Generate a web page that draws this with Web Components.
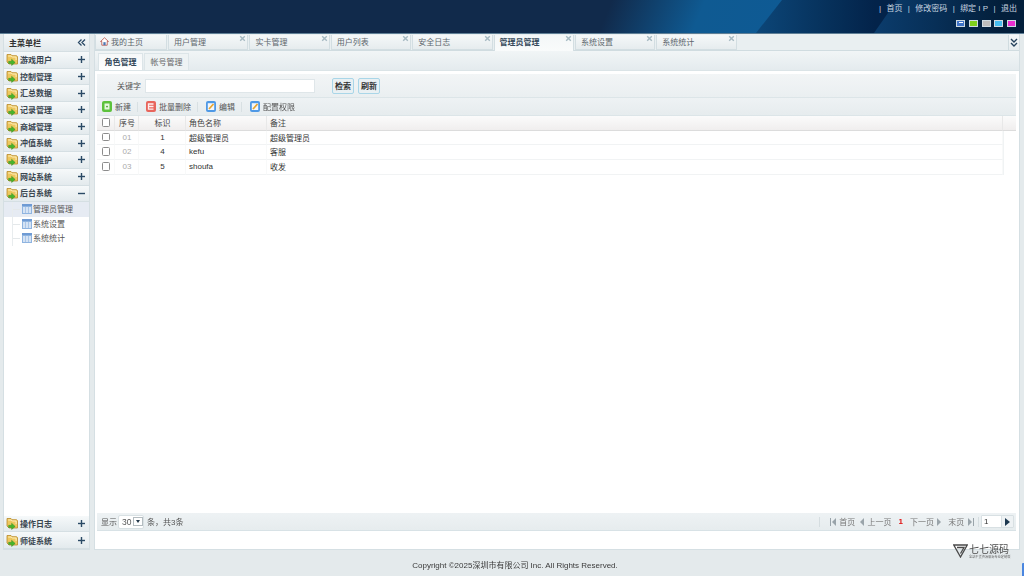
<!DOCTYPE html>
<html>
<head>
<meta charset="utf-8">
<title>后台</title>
<style>
    html, body { margin: 0; height: 100%; overflow: hidden; }
    body {
        width: 1024px; height: 576px;
        display: flex; flex-direction: column;
        background: #e4eaec;
        font-family: "Liberation Sans", "Noto Sans CJK SC", sans-serif;
        font-size: 8px; color: #333;
        filter: blur(.3px);
    }
</style>
</head>
<body>
<app-header></app-header>
<app-body>
    <side-menu slot="side">
        <menu-group label="游戏用户"></menu-group>
        <menu-group label="控制管理"></menu-group>
        <menu-group label="汇总数据"></menu-group>
        <menu-group label="记录管理"></menu-group>
        <menu-group label="商城管理"></menu-group>
        <menu-group label="冲值系统"></menu-group>
        <menu-group label="系统维护"></menu-group>
        <menu-group label="网站系统"></menu-group>
        <menu-group label="后台系统" open>
            <menu-leaf label="管理员管理" active></menu-leaf>
            <menu-leaf label="系统设置"></menu-leaf>
            <menu-leaf label="系统统计"></menu-leaf>
        </menu-group>
        <menu-group slot="bottom" label="操作日志"></menu-group>
        <menu-group slot="bottom" label="师徒系统"></menu-group>
    </side-menu>
    <main-panel slot="main"></main-panel>
</app-body>
<app-footer></app-footer>

<script>
const folderIcon = `<svg width="13" height="13" viewBox="0 0 13 13"><path d="M1 1.5h4l1 1.2h4.6l.9 1V11H3L1 9z" fill="#eec75e" stroke="#b8892a" stroke-width=".8"/><path d="M2.2 3h3l1 1h3.9v3" fill="none" stroke="#fff3c4" stroke-width=".9"/><path d="M2.6 8.3h3V6.2l3.6 3.2-3.6 3.2v-2.1h-3z" fill="#45b52c" stroke="#2f8a1c" stroke-width=".4"/></svg>`;
const tableIcon = `<svg width="10" height="10" viewBox="0 0 10 10"><rect width="10" height="10" fill="#8fb4e0"/><rect width="10" height="2" fill="#6f9bd4"/><path d="M1 3h2.3v6H1zM3.9 3h2.3v6H3.9zM6.8 3h2.2v6H6.8z" fill="#d5e3f4"/></svg>`;
const greenIcon = `<svg width="10" height="11" viewBox="0 0 10 11"><rect width="10" height="11" rx="2" fill="#5cc23c"/><path d="M2.5 2.5h5v6h-5z" fill="#e6f6df"/><path d="M4.2 5.6h1.6M5 4.8v1.6" stroke="#3e9e22" stroke-width=".9"/></svg>`;
const redIcon = `<svg width="10" height="11" viewBox="0 0 10 11"><rect width="10" height="11" rx="2" fill="#e8655c"/><path d="M7.5 3H2.5v5.2h5M2.5 5.5h5" fill="none" stroke="#fdeeee" stroke-width="1.3"/></svg>`;
const editIcon = `<svg width="10" height="11" viewBox="0 0 10 11"><rect width="10" height="11" rx="2" fill="#4f99e6"/><rect x="1.8" y="2.2" width="6.4" height="6.8" fill="#f3f6fa"/><path d="M3 8 7.5 3" stroke="#e9a52c" stroke-width="1.7"/></svg>`;

class AppHeader extends HTMLElement {
    constructor() {
        super()
        this.attachShadow({ mode: 'open' })
        this.shadowRoot.innerHTML = `
        <style>
            :host{
                display:flex;
                flex-direction:column;
                align-items:flex-end;
                position:relative;
                box-sizing:border-box;
                height:34px;
                flex:none;
                padding:3px 7px 0 0;
                border-bottom:1px solid #5f7f96;
                background:linear-gradient(112deg, #112a4b 0, #112a4b 59%, #0f5a92 68%, #0e5a94 76%);
                color:#c8d6e0;
            }
            :host::before{
                content:'';
                position:absolute;
                inset:0;
                clip-path:polygon(782px 0, 1024px 0, 1024px 33px, 756px 33px);
                background:linear-gradient(90deg,#0c4678 756px,#06305a 830px,#03234a 875px);
            }
            :host::after{
                content:'';
                position:absolute;
                inset:0;
                clip-path:polygon(897px 0, 1024px 0, 1024px 33px, 874px 33px);
                background:linear-gradient(90deg,#0b3c6c 875px,#072f57 935px,#031f3b 1000px);
            }
            .links,.sw{ position:relative; z-index:1; }
            .links{ display:flex; gap:5.4px; font-size:8px; line-height:11px; }
            .links span{ white-space:nowrap; }
            .sw{ display:flex; gap:3.75px; margin-top:6px; margin-right:1px; }
            .sw i{ display:block; width:7px; height:5px; border:1px solid #cfdbe2; }
        </style>
        <div class="links">
            <span>|</span><span>首页</span><span>|</span><span>修改密码</span><span>|</span><span>绑定 I P</span><span>|</span><span>退出</span>
        </div>
        <div class="sw">
            <i style="background:linear-gradient(#fff,#fff) 2px 1px/4px 1px no-repeat,#3f74c8"></i><i style="background:#7fd01c"></i><i style="background:#bdbdbd"></i><i style="background:#45bdf0"></i><i style="background:#ea2fd0"></i>
        </div>`
    }
}

class AppBody extends HTMLElement {
    constructor() {
        super()
        this.attachShadow({ mode: 'open' })
        this.shadowRoot.innerHTML = `
        <style>
            :host{
                display:flex;
                flex:none;
                height:516px;
                padding:0 4px 0 3px;
                gap:4px;
                box-sizing:border-box;
            }
        </style>
        <slot name="side"></slot><slot name="main"></slot>`
    }
}

class SideMenu extends HTMLElement {
    constructor() {
        super()
        this.attachShadow({ mode: 'open' })
        this.shadowRoot.innerHTML = `
        <style>
            :host{
                display:flex;
                flex-direction:column;
                width:87px;
                flex:none;
                background:#fff;
                border:solid #d5dfe3;
                border-width:0 1px 1px 1px;
                box-sizing:border-box;
            }
            .title{
                display:flex;
                align-items:center;
                justify-content:space-between;
                height:17px;
                padding:0 3px 0 5px;
                font-weight:bold;
                color:#333;
                background:linear-gradient(#f5f8f9,#e2e9ec);
                border-bottom:1px solid #d5dfe3;
                flex:none;
            }
            .list{ flex:1; }
            svg{ display:block; }
        </style>
        <div class="title">主菜单栏
            <svg width="9" height="9" viewBox="0 0 9 9" fill="none" stroke="#2b4a66" stroke-width="1.3"><path d="M4.5 1.5 1.5 4.5 4.5 7.5M8 1.5 5 4.5 8 7.5"/></svg>
        </div>
        <div class="list"><slot></slot></div>
        <div><slot name="bottom"></slot></div>`
    }
}

class MenuGroup extends HTMLElement {
    constructor() {
        super()
        this.attachShadow({ mode: 'open' })
        const open = this.hasAttribute('open')
        this.shadowRoot.innerHTML = `
        <style>
            :host{ display:block; }
            .row{
                display:flex;
                align-items:center;
                box-sizing:border-box;
                height:16.7px;
                padding:0 3px 0 2px;
                background:linear-gradient(#f6f9fa,#e3eaed);
                border-bottom:1px solid #d5dfe3;
                font-weight:bold;
                color:#3a4650;
            }
            .label{ flex:1; margin:0 0 1px 1px; }
            :host([slot=bottom]) .label{ margin-bottom:0; }
            svg{ display:block; flex:none; }
        </style>
        <div class="row">
            ${folderIcon}
            <span class="label">${this.getAttribute('label')}</span>
            <svg width="9" height="9" viewBox="0 0 9 9" fill="#2b4a66">
                <rect x="1" y="3.8" width="7" height="1.4"/>
                ${open ? '' : '<rect x="3.8" y="1" width="1.4" height="7"/>'}
            </svg>
        </div>
        ${open ? '<div><slot></slot></div>' : ''}`
    }
}

class MenuLeaf extends HTMLElement {
    constructor() {
        super()
        this.attachShadow({ mode: 'open' })
        this.shadowRoot.innerHTML = `
        <style>
            :host{
                display:flex;
                align-items:center;
                height:14.5px;
                padding-left:8px;
                color:#555;
            }
            :host([active]){ background:#e6ebf3; }
            .tree{ width:10px; height:100%; border-left:1px solid #e8ecee; position:relative; box-sizing:border-box; flex:none; }
            .tree::after{ content:''; position:absolute; left:0; right:2px; top:50%; border-top:1px solid #e4e8ea; }
            svg{ display:block; flex:none; margin-right:1px; }
            span.t{ margin-bottom:1px; }
        </style>
        <span class="tree"></span>${tableIcon}<span class="t">${this.getAttribute('label')}</span>`
    }
}

class TabStrip extends HTMLElement {
    constructor() {
        super()
        this.attachShadow({ mode: 'open' })
        this.shadowRoot.innerHTML = `
        <style>
            :host{
                display:flex;
                align-items:flex-end;
                box-sizing:border-box;
                height:17px;
                flex:none;
                padding:1px 0 0 0;
                gap:1px;
                background:#e9eff1;
                border-bottom:1px solid #d0dce0;
            }
            .more{
                margin-left:auto;
                width:11px;
                height:15px;
                box-sizing:border-box;
                align-self:flex-start;
                display:flex;
                align-items:center;
                justify-content:center;
                background:linear-gradient(#f5f8f9,#e6ecee);
                border:solid #d0dce0;
                border-width:0 0 0 1px;
            }
        </style>
        <slot></slot>
        <div class="more">
            <svg width="8" height="9" viewBox="0 0 8 9" fill="none" stroke="#26425c" stroke-width="1.4"><path d="M1 1l3 3 3-3M1 5l3 3 3-3"/></svg>
        </div>`
    }
}

class TabItem extends HTMLElement {
    constructor() {
        super()
        this.attachShadow({ mode: 'open' })
        const close = !this.hasAttribute('home')
        this.shadowRoot.innerHTML = `
        <style>
            :host{
                display:flex;
                align-items:center;
                position:relative;
                box-sizing:border-box;
                width:80.4px;
                height:15px;
                padding:0 0 2px 5px;
                color:#5d666d;
                background:linear-gradient(#f5f8f9,#e6ecee);
                border:solid #d3dee2;
                border-width:0 1px 1px 1px;
            }
            :host([home]){ width:72px; padding-left:4px; gap:2px; }
            :host([active]){
                height:16px;
                margin-bottom:-1px;
                background:linear-gradient(#f4f7f8,#f9fbfb);
                border-bottom:0;
                padding-bottom:3px;
                font-weight:bold;
                color:#34485a;
            }
            .x{ position:absolute; right:1px; top:0; }
            svg{ display:block; }
        </style>
        ${close ? '' : `<svg width="9" height="9" viewBox="0 0 8 8"><path d="M4 .7.5 4H1.6v3.3h4.8V4h1.1z" fill="#fff" stroke="#b5493f" stroke-width=".7"/><rect x="3" y="4.6" width="2" height="2.7" fill="#4b78b5"/></svg>`}
        <span>${this.getAttribute('label')}</span>
        ${close ? `<svg class="x" width="7" height="7" viewBox="0 0 7 7" stroke="#a5b9c2" stroke-width="1.4"><path d="M1.2 1.2l4.6 4.6M5.8 1.2 1.2 5.8"/></svg>` : ''}`
    }
}

class SubTabs extends HTMLElement {
    constructor() {
        super()
        this.attachShadow({ mode: 'open' })
        this.shadowRoot.innerHTML = `
        <style>
            :host{
                display:flex;
                align-items:flex-end;
                gap:1px;
                box-sizing:border-box;
                height:20px;
                flex:none;
                padding:2px 0 0 3px;
                background:linear-gradient(#f1f5f6,#e4ebee);
                border-bottom:1px solid #dbe4e7;
            }
            span{
                display:flex;
                align-items:center;
                justify-content:center;
                box-sizing:border-box;
                width:45px;
                height:17px;
                padding-bottom:2px;
                background:#eef3f4;
                border:solid #dce5e8;
                border-width:1px 1px 0 1px;
                color:#666;
            }
            span.on{ background:linear-gradient(#f6f8f9,#fff); color:#34485a; font-weight:bold; }
        </style>
        <span class="on">角色管理</span><span>帐号管理</span>`
    }
}

class SearchBar extends HTMLElement {
    constructor() {
        super()
        this.attachShadow({ mode: 'open' })
        this.shadowRoot.innerHTML = `
        <style>
            :host{
                display:flex;
                align-items:center;
                box-sizing:border-box;
                height:24px;
                flex:none;
                padding-left:20px;
                background:linear-gradient(#f2f5f6,#eaeff1);
                border-bottom:1px solid #dce5e8;
            }
            label{ color:#555; width:28px; }
            .input{
                box-sizing:border-box;
                width:170px;
                height:14px;
                background:#fff;
                border:1px solid #dfe6e9;
                margin-right:17px;
            }
            button{
                box-sizing:border-box;
                width:22px;
                height:16px;
                margin-right:4px;
                padding:0 0 1px;
                font:bold 8px "Liberation Sans","Noto Sans CJK SC",sans-serif;
                color:#333;
                background:#e9f0f3;
                border:1.5px solid #a9d6e8;
                border-radius:2px;
            }
        </style>
        <label>关键字</label><div class="input"></div><button>检索</button><button>刷新</button>`
    }
}

class ToolBar extends HTMLElement {
    constructor() {
        super()
        this.attachShadow({ mode: 'open' })
        this.shadowRoot.innerHTML = `
        <style>
            :host{
                display:flex;
                align-items:center;
                box-sizing:border-box;
                height:18px;
                flex:none;
                padding-left:5px;
                background:linear-gradient(#eef2f4,#e6ecee);
                border-bottom:1px solid #dce5e8;
            }
            .sep{ width:1px; height:10px; background:#d8e0e3; margin:0 8px 0 6px; }
            .b{ display:flex; align-items:center; gap:3px; color:#555; }
            svg{ display:block; }
            .b span{ margin-bottom:1px; }
        </style>
        <div class="b">${greenIcon}<span>新建</span></div><div class="sep"></div>
        <div class="b">${redIcon}<span>批量删除</span></div><div class="sep"></div>
        <div class="b">${editIcon}<span>编辑</span></div><div class="sep"></div>
        <div class="b">${editIcon}<span>配置权限</span></div>`
    }
}

class RoleTable extends HTMLElement {
    constructor() {
        super()
        this.attachShadow({ mode: 'open' })
        const rows = [['01', '1', '超级管理员', '超级管理员'], ['02', '4', 'kefu', '客服'], ['03', '5', 'shoufa', '收发']]
        const box = '<span class="box"></span>'
        this.shadowRoot.innerHTML = `
        <style>
            :host{ display:block; flex:1; background:#fff; position:relative; }
            .grid{
                display:grid;
                grid-template-columns:18px 24px 47px 81px 1fr;
                grid-template-rows:15px 14px 15px 15px;
                width:906px;
                border-right:1px solid #f0f3f4;
            }
            .grid > div{ display:flex; align-items:center; padding-left:3px; box-sizing:border-box; }
            .h{ padding-bottom:1px; background:linear-gradient(#fbfbfb,#f0eeee); border-bottom:1px solid #dcdcdc; border-right:1px solid #e8e8e8; color:#444; }
            .c{ padding-bottom:1px; border-bottom:1px solid #f1f3f4; border-right:1px solid #f8f9f9; color:#333; }
            .grid > .ctr{ justify-content:center; padding-left:1px; }
            .num{ color:#aaa; }
            .box{ display:block; box-sizing:border-box; width:8.5px; height:8.5px; background:#fff; border:1px solid #8c8c8c; border-radius:1.5px; }
            .tail{ position:absolute; left:906px; right:0; top:0; height:15px; background:linear-gradient(#fbfbfb,#f0eeee); border-bottom:1px solid #dcdcdc; box-sizing:border-box; }
        </style>
        <div class="tail"></div>
        <div class="grid">
            <div class="h ctr">${box}</div><div class="h ctr">序号</div><div class="h ctr">标识</div><div class="h">角色名称</div><div class="h">备注</div>
            ${rows.map(r => `<div class="c ctr">${box}</div><div class="c ctr num">${r[0]}</div><div class="c ctr">${r[1]}</div><div class="c">${r[2]}</div><div class="c">${r[3]}</div>`).join('')}
        </div>`
    }
}

class PagerBar extends HTMLElement {
    constructor() {
        super()
        this.attachShadow({ mode: 'open' })
        this.shadowRoot.innerHTML = `
        <style>
            :host{
                display:flex;
                align-items:center;
                box-sizing:border-box;
                height:18px;
                flex:none;
                padding:0 2px 0 4px;
                background:linear-gradient(#eef2f4,#e6ecee);
                border-bottom:1px solid #d8e2e6;
                color:#555;
                font-size:8px;
            }
            .sel{
                display:flex; align-items:center; gap:2px;
                box-sizing:border-box; width:26px; height:14px; margin:0 3px 0 1px; padding-left:3px;
                background:#fff; border:1px solid #d8e0e3; border-radius:2px;
                font-size:8.5px;
            }
            .arrow{ display:flex; align-items:center; justify-content:center; width:11px; height:9px; border:1px solid #b4bcc0; box-sizing:border-box; }
            .arrow::after{ content:''; border:solid transparent; border-width:3px 2.5px 0; border-top-color:#24384a; }
            .right{ margin-left:auto; display:flex; align-items:center; gap:7px; height:100%; }
            .vl{ width:1px; height:10px; background:#d5dde0; }
            .vl.l{ margin-right:3px; }
            .vl.r{ margin:0 -5px 0 -3px; }
            .nav{ display:flex; align-items:center; gap:1px; color:#777; }
            .nav.prev{ margin-left:-2px; }
            .cur{ color:#e01010; font-weight:bold; }
            .tl,.tr{ display:block; width:0; height:0; border:solid transparent; border-width:4px 0; }
            .tl{ border-right:4px solid #9aa4aa; } .tr{ border-left:4px solid #9aa4aa; }
            .bar{ display:block; width:1.5px; height:8px; background:#9aa4aa; }
            .go{
                display:flex; box-sizing:border-box; width:33px; height:13px;
                background:#fff; border:1px solid #d8e0e3; border-radius:1px; align-items:center; padding-left:2px; color:#333;
            }
            .go span{ flex:1; }
            .go b{ display:flex; align-items:center; justify-content:center; width:11px; height:100%; background:#eef2f4; border-left:1px solid #d8e0e3; }
            .go b::after{ content:''; border:solid transparent; border-width:4px 0 4px 5px; border-left-color:#1d3850; }
        </style>
        <span>显示</span>
        <div class="sel"><span>30</span><span class="arrow"></span></div>
        <span>条，共3条</span>
        <div class="right">
            <span class="vl l"></span>
            <span class="nav"><i class="bar"></i><i class="tl"></i>&nbsp;首页</span>
            <span class="nav prev"><i class="tl"></i>&nbsp;上一页</span>
            <span class="cur">1</span>
            <span class="nav">下一页&nbsp;<i class="tr"></i></span>
            <span class="nav">末页&nbsp;<i class="tr"></i><i class="bar"></i></span>
            <span class="vl r"></span>
            <div class="go"><span>1</span><b></b></div>
        </div>`
    }
}

class MainPanel extends HTMLElement {
    constructor() {
        super()
        this.attachShadow({ mode: 'open' })
        this.shadowRoot.innerHTML = `
        <style>
            :host{
                display:flex;
                flex-direction:column;
                flex:1;
                min-width:0;
                box-sizing:border-box;
                background:#fff;
                border:solid #d5dfe3;
                border-width:0 1px 1px 1px;
            }
            .content{
                display:flex;
                flex-direction:column;
                flex:1;
                margin:3px 3px 18px 2px;
            }
        </style>
        <tab-strip>
            <tab-item home label="我的主页"></tab-item>
            <tab-item label="用户管理"></tab-item>
            <tab-item label="实卡管理"></tab-item>
            <tab-item label="用户列表"></tab-item>
            <tab-item label="安全日志"></tab-item>
            <tab-item active label="管理员管理"></tab-item>
            <tab-item label="系统设置"></tab-item>
            <tab-item label="系统统计"></tab-item>
        </tab-strip>
        <sub-tabs></sub-tabs>
        <div class="content">
            <search-bar></search-bar>
            <tool-bar></tool-bar>
            <role-table></role-table>
            <pager-bar></pager-bar>
        </div>`
    }
}

class AppFooter extends HTMLElement {
    constructor() {
        super()
        this.attachShadow({ mode: 'open' })
        this.shadowRoot.innerHTML = `
        <style>
            :host{
                display:flex;
                align-items:flex-end;
                justify-content:center;
                flex:1;
                padding:0 0 5px 6px;
                box-sizing:border-box;
                color:#3a3a3a;
                font-size:8px;
                line-height:10px;
            }
            .mark{
                position:absolute;
                left:953px;
                top:544px;
                display:flex;
                gap:1px;
                color:#555;
            }
            .mark b{ display:block; font-size:10px; line-height:11px; font-weight:normal; color:#4a4a4a; white-space:nowrap; }
            .mark small{ display:block; font-size:3.2px; line-height:4px; white-space:nowrap; color:#666; }
            .pip{ position:absolute; right:0; top:563px; width:2px; height:13px; background:#4a86e0; border-radius:1px 0 0 0; }
        </style>
        Copyright ©2025深圳市有限公司 Inc. All Rights Reserved.
        <div class="mark">
            <svg width="15" height="14" viewBox="0 0 15 14" fill="none" stroke="#4a4a4a" stroke-width="1.3"><path d="M.8 1h13.4L7.5 13z"/><path d="M4 3.5h7L7.5 9.5"/></svg>
            <div><b>七七源码</b><small>全站干货资源来源专业定制版</small></div>
        </div>
        <div class="pip"></div>`
    }
}

customElements.define('app-header', AppHeader);
customElements.define('app-body', AppBody);
customElements.define('side-menu', SideMenu);
customElements.define('menu-group', MenuGroup);
customElements.define('menu-leaf', MenuLeaf);
customElements.define('tab-strip', TabStrip);
customElements.define('tab-item', TabItem);
customElements.define('sub-tabs', SubTabs);
customElements.define('search-bar', SearchBar);
customElements.define('tool-bar', ToolBar);
customElements.define('role-table', RoleTable);
customElements.define('pager-bar', PagerBar);
customElements.define('main-panel', MainPanel);
customElements.define('app-footer', AppFooter);
</script>
</body>
</html>
